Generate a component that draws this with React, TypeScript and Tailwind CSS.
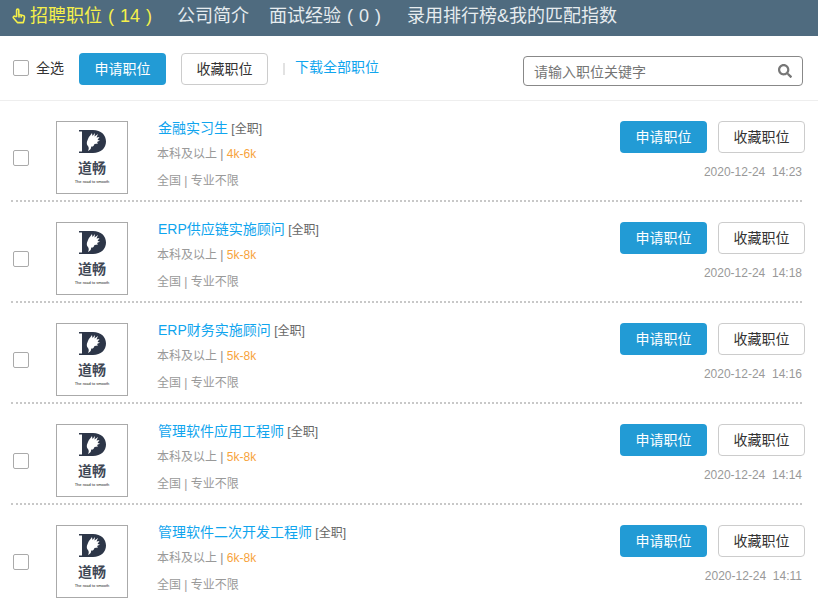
import React from 'react';
import { FaSearch } from 'react-icons/fa';

const jobs = [
  { title: '金融实习生', salary: '4k-6k', time: '2020-12-24  14:23' },
  { title: 'ERP供应链实施顾问', salary: '5k-8k', time: '2020-12-24  14:18' },
  { title: 'ERP财务实施顾问', salary: '5k-8k', time: '2020-12-24  14:16' },
  { title: '管理软件应用工程师', salary: '5k-8k', time: '2020-12-24  14:14' },
  { title: '管理软件二次开发工程师', salary: '6k-8k', time: '2020-12-24  14:11' },
];

const Hand = () => (
  <svg width="14" height="16" viewBox="0 0 14 16" fill="none" stroke="#f5f04a" strokeWidth="1.6" strokeLinejoin="round" strokeLinecap="round">
    <path d="M4.600 8.500V2.200a1.100 1.100 0 0 1 2.200 0v4.300l4.400 1a1.600 1.600 0 0 1 1.300 1.700l-.3 2.400-.9 3H5.400L1.500 10a1.100 1.100 0 0 1 1.600-1.500z" />
    <path d="M7 7v2M9.200 7.500v1.500" />
  </svg>
);

const Logo = () => (
  <div className="w-[72px] h-[73px] shrink-0 border border-[#aaaaaa] flex flex-col items-center pt-[8px] bg-white">
    <svg width="27" height="23" viewBox="0 0 27 23" className="shrink-0">
      <path d="M0 0h14c8 0 13 5 13 11.500S22 23 14 23H0v-1.500h3v-20H0z" fill="#2d3648" />
      <path d="M9 9c1-3 3-4 4-6l.5 3L16 3l-.5 3.500L19 4l-1.500 3.500 3-.5-2 3 2.500.500-3 1.500 1 1.500-3.500.5c-.5 2-2 3-3.500 2.500.5 1.500-.5 3.500-3 4.500 1-2 1-3.500 0-5-1-1-1.500-2.500-1-4.500z" fill="#ffffff" />
    </svg>
    <div className="text-[14px] leading-[18px] font-bold text-[#3f4856] mt-[6px]">道畅</div>
    <div className="text-[4px] leading-[5px] text-[#222222] whitespace-nowrap mt-[2px]">The road to smooth</div>
  </div>
);

const Checkbox = () => (
  <span className="block w-[16px] h-[16px] shrink-0 border border-[#aaaaaa] rounded-[2px] bg-white" />
);

const ApplyButton = () => (
  <button className="w-[87px] h-[32px] rounded-[4px] bg-[#229bd5] text-white text-[14px]">申请职位</button>
);

const SaveButton = () => (
  <button className="w-[87px] h-[32px] rounded-[4px] bg-white border border-[#cccccc] text-[#333333] text-[14px]">收藏职位</button>
);

const JobRow = ({ job, last }: { job: (typeof jobs)[number]; last: boolean }) => (
  <div className={last ? 'h-[101px] mx-[11px] w-[791px] flex items-start pt-[20px]' : 'h-[101px] mx-[11px] w-[791px] border-b-2 border-dotted border-[#c8c8c8] flex items-start pt-[20px]'}>
    <div className="mt-[29px] ml-[2px] mr-[27px]">
      <Checkbox />
    </div>
    <Logo />
    <div className="ml-[30px] flex-1 -mt-[2px]">
      <div className="text-[12px] leading-[18px] text-[#666666] whitespace-nowrap">
        <span className="text-[14px] text-[#10a5ee]">{job.title}</span> [全职]
      </div>
      <div className="text-[12px] leading-[18px] text-[#999999] mt-[7px] -ml-[1px]">
        本科及以上 <span className="text-[#888888]">|</span> <span className="text-[#f7a33c]">{job.salary}</span>
      </div>
      <div className="text-[12px] leading-[18px] text-[#999999] mt-[9px] -ml-[1px]">全国 | 专业不限</div>
    </div>
    <div className="flex flex-col items-end">
      <div className="flex gap-[11px] -mr-[3px]">
        <ApplyButton />
        <SaveButton />
      </div>
      <div className="text-[12px] leading-[16px] text-[#999999] mt-[11px] whitespace-pre">{job.time}</div>
    </div>
  </div>
);

export default function App() {
  return (
    <div className="w-[818px] h-[612px] overflow-hidden bg-white font-['Liberation_Sans','Noto_Sans_CJK_SC',sans-serif]">
      <div className="h-[36px] bg-[#4f6b7f] flex items-center pl-[12px] pb-[4px] text-[18px] text-[#e6ecef] whitespace-pre">
        <Hand />
        <span className="ml-[4px] text-[#f5f04a]">招聘职位 <span className="mx-[1px]">(</span> 14 <span className="mx-[1px]">)</span></span>
        <span className="ml-[24px]">公司简介</span>
        <span className="ml-[20px]">面试经验 <span className="mx-[1px]">(</span> 0 <span className="mx-[1px]">)</span></span>
        <span className="ml-[25px]">录用排行榜&amp;我的匹配指数</span>
      </div>
      <div className="h-[65px] border-b border-[#eeeeee] flex items-center pl-[13px]">
        <Checkbox />
        <span className="ml-[7px] text-[14px] text-[#333333]">全选</span>
        <div className="ml-[15px] flex gap-[15px] mt-[2px]">
          <ApplyButton />
          <SaveButton />
        </div>
        <span className="ml-[15px] w-[2px] h-[12px] bg-[#e2e2e2] mt-[2px]" />
        <a className="ml-[10px] text-[14px] text-[#10a5ee] -mt-[1px]">下载全部职位</a>
        <div className="ml-auto mr-[15px] mt-[5px] w-[280px] h-[30px] border border-[#888888] rounded-[4px] flex items-center pl-[10px] pr-[10px]">
          <span className="text-[14px] leading-[20px] text-[#757575] flex-1 mt-[3px]">请输入职位关键字</span>
          <FaSearch size={14} className="text-[#777777]" />
        </div>
      </div>
      {jobs.map((job, i) => (
        <JobRow key={job.title} job={job} last={i === jobs.length - 1} />
      ))}
    </div>
  );
}
